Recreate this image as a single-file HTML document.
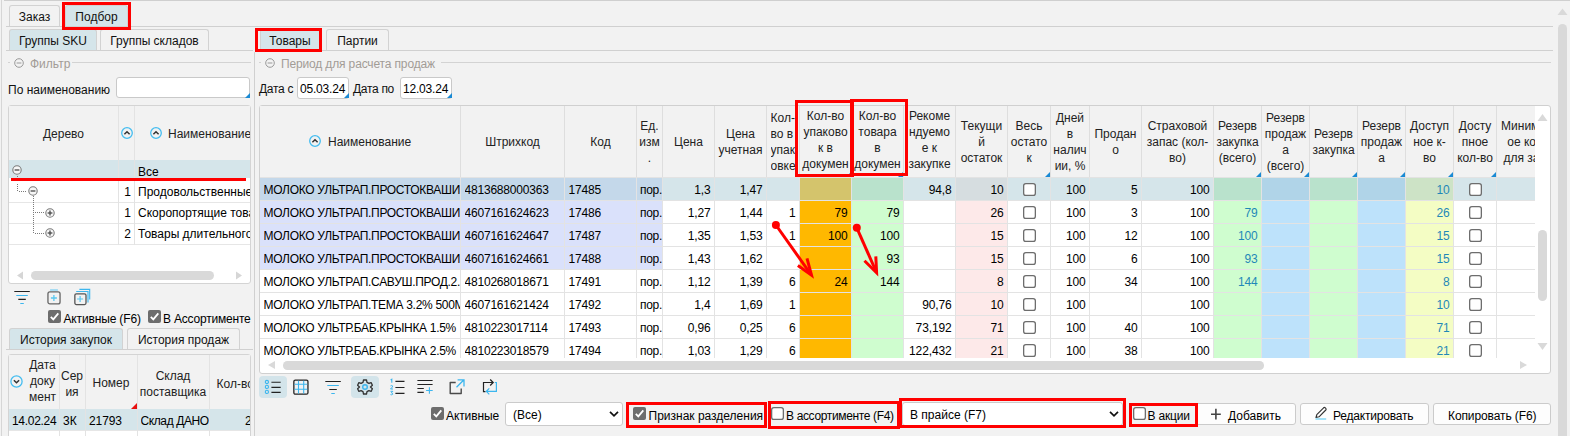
<!DOCTYPE html>
<html><head><meta charset="utf-8"><style>
html,body{margin:0;padding:0;}
body{width:1570px;height:436px;position:relative;overflow:hidden;background:#f2f2f2;font-family:"Liberation Sans", sans-serif;font-size:12px;color:#000;}
div{position:absolute;box-sizing:content-box;}
</style></head><body>
<div style="left:4px;top:0px;width:1566px;height:1px;background:#cfcfcf;"></div>
<div style="left:1px;top:0px;width:1px;height:436px;background:#d6d6d6;"></div>
<div style="left:9px;top:5px;width:49px;height:21px;border:1px solid #d2d2d2;border-bottom:none;border-radius:3px 3px 0 0;background:#f2f2f2"></div>
<div style="left:9px;top:8.5px;width:51px;text-align:center;height:16px;line-height:16px;font-size:12px;color:#111;white-space:nowrap;">Заказ</div>
<div style="left:65px;top:5px;width:61px;height:21px;border:1px solid #d2d2d2;border-bottom:none;border-radius:3px 3px 0 0;background:#d5e5ea"></div>
<div style="left:65px;top:8.5px;width:63px;text-align:center;height:16px;line-height:16px;font-size:12px;color:#111;white-space:nowrap;">Подбор</div>
<div style="left:6px;top:26px;width:1547px;height:1px;background:#d0d0d0;"></div>
<div style="left:62px;top:2px;width:63px;height:22px;border:3px solid #ff0000;z-index:50"></div>
<div style="left:9px;top:29px;width:86px;height:21px;border:1px solid #d2d2d2;border-bottom:none;border-radius:3px 3px 0 0;background:#d5e5ea"></div>
<div style="left:9px;top:32.5px;width:88px;text-align:center;height:16px;line-height:16px;font-size:12px;color:#111;white-space:nowrap;">Группы SKU</div>
<div style="left:100px;top:29px;width:107px;height:21px;border:1px solid #d2d2d2;border-bottom:none;border-radius:3px 3px 0 0;background:#f2f2f2"></div>
<div style="left:100px;top:32.5px;width:109px;text-align:center;height:16px;line-height:16px;font-size:12px;color:#111;white-space:nowrap;">Группы складов</div>
<div style="left:6px;top:50px;width:247px;height:1px;background:#d0d0d0;"></div>
<div style="left:8px;top:62px;width:243px;height:1px;background:#d3d3d3;"></div>
<div style="left:10px;top:55px;width:62px;height:14px;background:#f2f2f2;"></div>
<svg style="position:absolute;left:14px;top:58px;z-index:5" width="10" height="10" viewBox="0 0 10 10"><circle cx="5" cy="5" r="4.3" fill="none" stroke="#9a9a9a" stroke-width="1"/><path d="M2.6 5 H7.4" stroke="#9a9a9a" stroke-width="1"/></svg>
<div style="left:30px;top:56.0px;height:16px;line-height:16px;font-size:12px;color:#a29c96;white-space:nowrap;">Фильтр</div>
<div style="left:8px;top:81.5px;height:16px;line-height:16px;font-size:12px;color:#111;white-space:nowrap;">По наименованию</div>
<div style="left:116px;top:77px;width:132px;height:19px;border:1px solid #c9c9c9;border-radius:3px;background:#fff"></div>
<svg style="position:absolute;left:245px;top:93px;z-index:5" width="5" height="5" viewBox="0 0 5 5"><path d="M5 0 L5 5 L0 5 Z" fill="#1a8ad4"/></svg>
<div style="left:8px;top:105px;width:241px;height:177px;border:1px solid #d4d4d4;border-radius:3px;background:#fff"></div>
<div style="left:9px;top:106px;width:241px;height:176px;overflow:hidden;">
<div style="left:0px;top:0px;width:241px;height:54px;background:#f2f2f2;"></div>
<div style="left:0px;top:20.0px;width:109px;text-align:center;height:16px;line-height:16px;font-size:12px;color:#222;white-space:nowrap;">Дерево</div>
<svg style="position:absolute;left:110.5px;top:20.30000000000001px;z-index:5" width="14" height="14" viewBox="0 0 14 14"><circle cx="7" cy="7" r="5.3" fill="none" stroke="#45bdf0" stroke-width="1.3"/><path transform="translate(7 7)" d="M-2.6 1.3 L0 -1.3 L2.6 1.3" stroke="#333" stroke-width="1.5" fill="none"/></svg>
<svg style="position:absolute;left:139.5px;top:20.30000000000001px;z-index:5" width="14" height="14" viewBox="0 0 14 14"><circle cx="7" cy="7" r="5.3" fill="none" stroke="#45bdf0" stroke-width="1.3"/><path transform="translate(7 7)" d="M-2.6 1.3 L0 -1.3 L2.6 1.3" stroke="#333" stroke-width="1.5" fill="none"/></svg>
<div style="left:159px;top:20.0px;height:16px;line-height:16px;font-size:12px;color:#222;white-space:nowrap;">Наименование</div>
<div style="left:0px;top:54px;width:241px;height:18px;background:#d5e5ea;"></div>
<div style="left:129px;top:58.0px;height:16px;line-height:16px;font-size:12px;color:#000;white-space:nowrap;">Все</div>
<div style="left:0px;top:96px;width:241px;height:1px;background:#e6e6e6;"></div>
<div style="left:0px;top:117px;width:241px;height:1px;background:#e6e6e6;"></div>
<div style="left:0px;top:138px;width:241px;height:1px;background:#e6e6e6;"></div>
<div style="left:109px;top:0px;width:1px;height:139px;background:#e3e3e3;"></div>
<div style="left:125px;top:0px;width:1px;height:139px;background:#e3e3e3;"></div>
<div style="left:-78px;top:78.0px;width:200px;text-align:right;height:16px;line-height:16px;font-size:12px;color:#000;white-space:nowrap;">1</div>
<div style="left:129px;top:78.0px;height:16px;line-height:16px;font-size:12px;color:#000;white-space:nowrap;">Продовольственные товары</div>
<div style="left:-78px;top:99.0px;width:200px;text-align:right;height:16px;line-height:16px;font-size:12px;color:#000;white-space:nowrap;">1</div>
<div style="left:129px;top:99.0px;height:16px;line-height:16px;font-size:12px;color:#000;white-space:nowrap;">Скоропортящие товары</div>
<div style="left:-78px;top:120.0px;width:200px;text-align:right;height:16px;line-height:16px;font-size:12px;color:#000;white-space:nowrap;">2</div>
<div style="left:129px;top:120.0px;height:16px;line-height:16px;font-size:12px;color:#000;white-space:nowrap;">Товары длительного хранения</div>
<svg style="position:absolute;left:-9px;top:64px;z-index:5" width="60" height="70" viewBox="0 0 60 70"><rect x="17" y="6" width="1" height="1" fill="#7a7a7a"/><rect x="17" y="14" width="1" height="1" fill="#7a7a7a"/><rect x="17" y="16" width="1" height="1" fill="#7a7a7a"/><rect x="17" y="18" width="1" height="1" fill="#7a7a7a"/><rect x="17" y="20" width="1" height="1" fill="#7a7a7a"/><rect x="19" y="21" width="1" height="1" fill="#7a7a7a"/><rect x="21" y="21" width="1" height="1" fill="#7a7a7a"/><rect x="23" y="21" width="1" height="1" fill="#7a7a7a"/><rect x="25" y="21" width="1" height="1" fill="#7a7a7a"/><rect x="33" y="26" width="1" height="1" fill="#7a7a7a"/><rect x="33" y="28" width="1" height="1" fill="#7a7a7a"/><rect x="33" y="30" width="1" height="1" fill="#7a7a7a"/><rect x="33" y="32" width="1" height="1" fill="#7a7a7a"/><rect x="33" y="34" width="1" height="1" fill="#7a7a7a"/><rect x="33" y="36" width="1" height="1" fill="#7a7a7a"/><rect x="33" y="38" width="1" height="1" fill="#7a7a7a"/><rect x="33" y="40" width="1" height="1" fill="#7a7a7a"/><rect x="33" y="42" width="1" height="1" fill="#7a7a7a"/><rect x="33" y="44" width="1" height="1" fill="#7a7a7a"/><rect x="33" y="46" width="1" height="1" fill="#7a7a7a"/><rect x="33" y="48" width="1" height="1" fill="#7a7a7a"/><rect x="33" y="50" width="1" height="1" fill="#7a7a7a"/><rect x="33" y="52" width="1" height="1" fill="#7a7a7a"/><rect x="33" y="54" width="1" height="1" fill="#7a7a7a"/><rect x="33" y="56" width="1" height="1" fill="#7a7a7a"/><rect x="33" y="58" width="1" height="1" fill="#7a7a7a"/><rect x="33" y="60" width="1" height="1" fill="#7a7a7a"/><rect x="33" y="62" width="1" height="1" fill="#7a7a7a"/><rect x="35" y="42" width="1" height="1" fill="#7a7a7a"/><rect x="35" y="63" width="1" height="1" fill="#7a7a7a"/><rect x="37" y="42" width="1" height="1" fill="#7a7a7a"/><rect x="37" y="63" width="1" height="1" fill="#7a7a7a"/><rect x="39" y="42" width="1" height="1" fill="#7a7a7a"/><rect x="39" y="63" width="1" height="1" fill="#7a7a7a"/><rect x="41" y="42" width="1" height="1" fill="#7a7a7a"/><rect x="41" y="63" width="1" height="1" fill="#7a7a7a"/><rect x="43" y="42" width="1" height="1" fill="#7a7a7a"/><rect x="43" y="63" width="1" height="1" fill="#7a7a7a"/></svg>
<svg style="position:absolute;left:3.1999999999999993px;top:59px;z-index:5" width="10" height="10" viewBox="0 0 10 10"><circle cx="5" cy="5" r="4.2" fill="#f7f7f7" stroke="#7a7a7a" stroke-width="1.1"/><path d="M2.6 5 H7.4" stroke="#4a4a4a" stroke-width="1.3"/></svg>
<svg style="position:absolute;left:19.200000000000003px;top:79.80000000000001px;z-index:5" width="10" height="10" viewBox="0 0 10 10"><circle cx="5" cy="5" r="4.2" fill="#f7f7f7" stroke="#7a7a7a" stroke-width="1.1"/><path d="M2.6 5 H7.4" stroke="#4a4a4a" stroke-width="1.3"/></svg>
<svg style="position:absolute;left:35.5px;top:101.5px;z-index:5" width="10" height="10" viewBox="0 0 10 10"><circle cx="5" cy="5" r="4.2" fill="#f7f7f7" stroke="#7a7a7a" stroke-width="1.1"/><path d="M2.6 5 H7.4" stroke="#4a4a4a" stroke-width="1.3"/><path d="M5 2.6 V7.4" stroke="#4a4a4a" stroke-width="1.3"/></svg>
<svg style="position:absolute;left:35.5px;top:122px;z-index:5" width="10" height="10" viewBox="0 0 10 10"><circle cx="5" cy="5" r="4.2" fill="#f7f7f7" stroke="#7a7a7a" stroke-width="1.1"/><path d="M2.6 5 H7.4" stroke="#4a4a4a" stroke-width="1.3"/><path d="M5 2.6 V7.4" stroke="#4a4a4a" stroke-width="1.3"/></svg>
<svg style="position:absolute;left:7px;top:165px;z-index:5" width="8" height="9" viewBox="0 0 8 9"><path d="M7 0.5 L1 4.5 L7 8.5 Z" fill="#d6d6d6"/></svg>
<div style="left:22px;top:165px;width:183px;height:9px;border-radius:4.5px;background:#d9d9d9"></div>
<svg style="position:absolute;left:226px;top:165px;z-index:5" width="8" height="9" viewBox="0 0 8 9"><path d="M1 0.5 L7 4.5 L1 8.5 Z" fill="#d6d6d6"/></svg>
</div>
<div style="left:11px;top:178px;width:235px;height:3px;background:#ff0000;z-index:40"></div>
<svg style="position:absolute;left:14px;top:290px;z-index:5" width="16" height="15" viewBox="0 0 16 15"><path d="M0.3 1.5 H15.8 M4.3 9.4 H11.8" stroke="#222" stroke-width="1.15"/><path d="M2.3 5.5 H13.8 M6.3 13.5 H9.8" stroke="#3cb6ee" stroke-width="1.15"/></svg>
<svg style="position:absolute;left:46px;top:288px;z-index:5" width="16" height="17" viewBox="0 0 16 17"><path d="M4.1 2 H11.9" stroke="#7fd0f2" stroke-width="1.3"/><rect x="1.95" y="3.85" width="12.1" height="12.1" rx="2" fill="none" stroke="#666" stroke-width="1.3"/><path d="M7.9 7 V13 M4.9 10 H10.9" stroke="#5ac8f0" stroke-width="1.3"/></svg>
<svg style="position:absolute;left:73px;top:288px;z-index:5" width="18" height="18" viewBox="0 0 18 18"><path d="M6.4 1.4 H16.7 V11.5" stroke="#3cb6ee" stroke-width="1.1" fill="none"/><path d="M3.2 3.5 H15 V14.6" stroke="#3cb6ee" stroke-width="1.1" fill="none"/><rect x="1.85" y="5.85" width="11.15" height="10.75" rx="1.5" fill="#f2f2f2" stroke="#555" stroke-width="1.3"/><path d="M7.1 8 V14 M4.1 11 H10.1" stroke="#5ac8f0" stroke-width="1.2"/></svg>
<svg style="position:absolute;left:48px;top:310px;z-index:5" width="13" height="13" viewBox="0 0 13 13"><rect x="0" y="0" width="13" height="13" rx="2" fill="#6d6d6d"/><path d="M2.8 6.8 L5.3 9.3 L10.3 3.3" stroke="#fff" stroke-width="1.8" fill="none"/></svg>
<div style="left:63.5px;top:310.5px;height:16px;line-height:16px;font-size:12px;color:#000;white-space:nowrap;letter-spacing:-0.15px">Активные (F6)</div>
<svg style="position:absolute;left:148px;top:310px;z-index:5" width="13" height="13" viewBox="0 0 13 13"><rect x="0" y="0" width="13" height="13" rx="2" fill="#6d6d6d"/><path d="M2.8 6.8 L5.3 9.3 L10.3 3.3" stroke="#fff" stroke-width="1.8" fill="none"/></svg>
<div style="left:163px;top:310.5px;height:16px;line-height:16px;font-size:12px;color:#000;white-space:nowrap;letter-spacing:-0.2px">В Ассортименте</div>
<div style="left:9px;top:328px;width:112px;height:21px;border:1px solid #d2d2d2;border-bottom:none;border-radius:3px 3px 0 0;background:#d5e5ea"></div>
<div style="left:9px;top:331.5px;width:114px;text-align:center;height:16px;line-height:16px;font-size:12px;color:#111;white-space:nowrap;">История закупок</div>
<div style="left:127px;top:328px;width:111px;height:21px;border:1px solid #d2d2d2;border-bottom:none;border-radius:3px 3px 0 0;background:#f2f2f2"></div>
<div style="left:127px;top:331.5px;width:113px;text-align:center;height:16px;line-height:16px;font-size:12px;color:#111;white-space:nowrap;">История продаж</div>
<div style="left:6px;top:349px;width:247px;height:1px;background:#d0d0d0;"></div>
<div style="left:8px;top:354px;width:241px;height:100px;border:1px solid #d4d4d4;border-radius:3px;background:#fff"></div>
<div style="left:9px;top:355px;width:241px;height:81px;overflow:hidden;">
<div style="left:0px;top:0px;width:241px;height:54px;background:#f2f2f2;"></div>
<div style="left:0px;top:54px;width:241px;height:21px;background:#d5e5ea;"></div>
<div style="left:0px;top:75px;width:241px;height:1px;background:#e6e6e6;"></div>
<div style="left:50px;top:0px;width:1px;height:81px;background:#e3e3e3;"></div>
<div style="left:76px;top:0px;width:1px;height:81px;background:#e3e3e3;"></div>
<div style="left:128px;top:0px;width:1px;height:81px;background:#e3e3e3;"></div>
<div style="left:200px;top:0px;width:1px;height:81px;background:#e3e3e3;"></div>
<svg style="position:absolute;left:1px;top:20px;z-index:5" width="13" height="13" viewBox="0 0 13 13"><circle cx="6.5" cy="6.5" r="5.6" fill="none" stroke="#45bdf0" stroke-width="1.3"/><path d="M3.9 5.2 L6.5 7.8 L9.1 5.2" stroke="#333" stroke-width="1.5" fill="none"/></svg>
<div style="left:17px;top:1.5px;width:33px;text-align:center;height:16px;line-height:16px;font-size:12px;color:#222;white-space:nowrap;">Дата</div>
<div style="left:17px;top:17.5px;width:33px;text-align:center;height:16px;line-height:16px;font-size:12px;color:#222;white-space:nowrap;">доку</div>
<div style="left:17px;top:33.5px;width:33px;text-align:center;height:16px;line-height:16px;font-size:12px;color:#222;white-space:nowrap;">мент</div>
<div style="left:50px;top:12.5px;width:26px;text-align:center;height:16px;line-height:16px;font-size:12px;color:#222;white-space:nowrap;">Сер</div>
<div style="left:50px;top:28.5px;width:26px;text-align:center;height:16px;line-height:16px;font-size:12px;color:#222;white-space:nowrap;">ия</div>
<div style="left:76px;top:20.0px;width:52px;text-align:center;height:16px;line-height:16px;font-size:12px;color:#222;white-space:nowrap;">Номер</div>
<svg style="position:absolute;left:122px;top:48px;z-index:5" width="6" height="6" viewBox="0 0 6 6"><path d="M6 0 L6 6 L0 6 Z" fill="#e81010"/></svg>
<div style="left:128px;top:13.0px;width:72px;text-align:center;height:16px;line-height:16px;font-size:12px;color:#222;white-space:nowrap;">Склад</div>
<div style="left:128px;top:29.0px;width:72px;text-align:center;height:16px;line-height:16px;font-size:12px;color:#222;white-space:nowrap;">поставщика</div>
<div style="left:207.5px;top:21.0px;height:16px;line-height:16px;font-size:12px;color:#222;white-space:nowrap;">Кол-во</div>
<div style="left:3px;top:57.5px;height:16px;line-height:16px;font-size:12px;color:#000;white-space:nowrap;letter-spacing:-0.3px">14.02.24</div>
<div style="left:54px;top:57.5px;height:16px;line-height:16px;font-size:12px;color:#000;white-space:nowrap;">3К</div>
<div style="left:80px;top:57.5px;height:16px;line-height:16px;font-size:12px;color:#000;white-space:nowrap;letter-spacing:-0.1px">21793</div>
<div style="left:131.5px;top:57.5px;width:68px;overflow:hidden;height:16px;line-height:16px;font-size:12px;color:#000;white-space:nowrap;letter-spacing:-0.4px">Склад ДАНОН</div>
<div style="left:236px;top:57.5px;height:16px;line-height:16px;font-size:12px;color:#000;white-space:nowrap;">2</div>
</div>
<div style="left:254px;top:52px;width:1px;height:384px;background:#d0d0d0;"></div>
<div style="left:260px;top:29px;width:58px;height:21px;border:1px solid #d2d2d2;border-bottom:none;border-radius:3px 3px 0 0;background:#d5e5ea"></div>
<div style="left:260px;top:32.5px;width:60px;text-align:center;height:16px;line-height:16px;font-size:12px;color:#111;white-space:nowrap;">Товары</div>
<div style="left:326px;top:29px;width:61px;height:21px;border:1px solid #d2d2d2;border-bottom:none;border-radius:3px 3px 0 0;background:#f2f2f2"></div>
<div style="left:326px;top:32.5px;width:63px;text-align:center;height:16px;line-height:16px;font-size:12px;color:#111;white-space:nowrap;">Партии</div>
<div style="left:255px;top:50px;width:1298px;height:1px;background:#d0d0d0;"></div>
<div style="left:255px;top:28px;width:61px;height:18px;border:3px solid #ff0000;z-index:50"></div>
<div style="left:259px;top:62px;width:1292px;height:1px;background:#d3d3d3;"></div>
<div style="left:261px;top:55px;width:180px;height:14px;background:#f2f2f2;"></div>
<svg style="position:absolute;left:265px;top:58px;z-index:5" width="10" height="10" viewBox="0 0 10 10"><circle cx="5" cy="5" r="4.3" fill="none" stroke="#9a9a9a" stroke-width="1"/><path d="M2.6 5 H7.4" stroke="#9a9a9a" stroke-width="1"/></svg>
<div style="left:281px;top:56.0px;height:16px;line-height:16px;font-size:12px;color:#a29c96;white-space:nowrap;letter-spacing:-0.15px">Период для расчета продаж</div>
<div style="left:259px;top:81.0px;height:16px;line-height:16px;font-size:12px;color:#111;white-space:nowrap;letter-spacing:-0.3px">Дата с</div>
<div style="left:297px;top:77px;width:50px;height:20px;border:1px solid #c9c9c9;border-radius:3px;background:#fff"></div>
<div style="left:300px;top:81.0px;height:16px;line-height:16px;font-size:12px;color:#000;white-space:nowrap;letter-spacing:-0.2px">05.03.24</div>
<svg style="position:absolute;left:344px;top:93px;z-index:5" width="5" height="5" viewBox="0 0 5 5"><path d="M5 0 L5 5 L0 5 Z" fill="#1a8ad4"/></svg>
<div style="left:353px;top:81.0px;height:16px;line-height:16px;font-size:12px;color:#111;white-space:nowrap;letter-spacing:-0.3px">Дата по</div>
<div style="left:400px;top:77px;width:50px;height:20px;border:1px solid #c9c9c9;border-radius:3px;background:#fff"></div>
<div style="left:403px;top:81.0px;height:16px;line-height:16px;font-size:12px;color:#000;white-space:nowrap;letter-spacing:-0.2px">12.03.24</div>
<svg style="position:absolute;left:447px;top:93px;z-index:5" width="5" height="5" viewBox="0 0 5 5"><path d="M5 0 L5 5 L0 5 Z" fill="#1a8ad4"/></svg>
<div style="left:259px;top:105px;width:1292px;height:269px;border:1px solid #d0d0d0;border-radius:3px;background:#fff;box-sizing:border-box"></div>
<div style="left:260px;top:106px;width:1275px;height:252px;overflow:hidden;z-index:2">
<div style="left:0px;top:0px;width:1400px;height:71px;background:#f2f2f2;"></div>
<div style="left:201px;top:28.400000000000006px;width:103px;text-align:center;height:16px;line-height:16px;color:#222;white-space:nowrap;">Штрихкод</div>
<div style="left:305px;top:28.400000000000006px;width:71px;text-align:center;height:16px;line-height:16px;color:#222;white-space:nowrap;">Код</div>
<div style="left:377px;top:12.400000000000006px;width:25px;text-align:center;height:16px;line-height:16px;color:#222;white-space:nowrap;">Ед.</div>
<div style="left:377px;top:28.400000000000006px;width:25px;text-align:center;height:16px;line-height:16px;color:#222;white-space:nowrap;">изм</div>
<div style="left:377px;top:44.400000000000006px;width:25px;text-align:center;height:16px;line-height:16px;color:#222;white-space:nowrap;">.</div>
<div style="left:403px;top:28.400000000000006px;width:51px;text-align:center;height:16px;line-height:16px;color:#222;white-space:nowrap;">Цена</div>
<div style="left:455px;top:20.400000000000006px;width:51px;text-align:center;height:16px;line-height:16px;color:#222;white-space:nowrap;">Цена</div>
<div style="left:455px;top:36.400000000000006px;width:51px;text-align:center;height:16px;line-height:16px;color:#222;white-space:nowrap;">учетная</div>
<div style="left:510.5px;top:4.400000000000006px;width:28.5px;overflow:hidden;height:16px;line-height:16px;color:#222;white-space:nowrap;">Кол-</div>
<div style="left:510.5px;top:20.400000000000006px;width:28.5px;overflow:hidden;height:16px;line-height:16px;color:#222;white-space:nowrap;">во в</div>
<div style="left:510.5px;top:36.400000000000006px;width:28.5px;overflow:hidden;height:16px;line-height:16px;color:#222;white-space:nowrap;">упак</div>
<div style="left:510.5px;top:52.400000000000006px;width:28.5px;overflow:hidden;height:16px;line-height:16px;color:#222;white-space:nowrap;">овке</div>
<div style="left:540px;top:2.3000000000000114px;width:51px;text-align:center;height:16px;line-height:16px;color:#222;white-space:nowrap;">Кол-во</div>
<div style="left:540px;top:18.30000000000001px;width:51px;text-align:center;height:16px;line-height:16px;color:#222;white-space:nowrap;">упаково</div>
<div style="left:540px;top:34.30000000000001px;width:51px;text-align:center;height:16px;line-height:16px;color:#222;white-space:nowrap;">к в</div>
<div style="left:540px;top:50.30000000000001px;width:51px;text-align:center;height:16px;line-height:16px;color:#222;white-space:nowrap;">докумен</div>
<div style="left:592px;top:2.3000000000000114px;width:51px;text-align:center;height:16px;line-height:16px;color:#222;white-space:nowrap;">Кол-во</div>
<div style="left:592px;top:18.30000000000001px;width:51px;text-align:center;height:16px;line-height:16px;color:#222;white-space:nowrap;">товара</div>
<div style="left:592px;top:34.30000000000001px;width:51px;text-align:center;height:16px;line-height:16px;color:#222;white-space:nowrap;">в</div>
<div style="left:592px;top:50.30000000000001px;width:51px;text-align:center;height:16px;line-height:16px;color:#222;white-space:nowrap;">докумен</div>
<div style="left:644px;top:2.3000000000000114px;width:51px;text-align:center;height:16px;line-height:16px;color:#222;white-space:nowrap;">Рекоме</div>
<div style="left:644px;top:18.30000000000001px;width:51px;text-align:center;height:16px;line-height:16px;color:#222;white-space:nowrap;">ндуемо</div>
<div style="left:644px;top:34.30000000000001px;width:51px;text-align:center;height:16px;line-height:16px;color:#222;white-space:nowrap;">е к</div>
<div style="left:644px;top:50.30000000000001px;width:51px;text-align:center;height:16px;line-height:16px;color:#222;white-space:nowrap;">закупке</div>
<div style="left:696px;top:12.400000000000006px;width:51px;text-align:center;height:16px;line-height:16px;color:#222;white-space:nowrap;">Текущи</div>
<div style="left:696px;top:28.400000000000006px;width:51px;text-align:center;height:16px;line-height:16px;color:#222;white-space:nowrap;">й</div>
<div style="left:696px;top:44.400000000000006px;width:51px;text-align:center;height:16px;line-height:16px;color:#222;white-space:nowrap;">остаток</div>
<div style="left:748px;top:12.400000000000006px;width:42px;text-align:center;height:16px;line-height:16px;color:#222;white-space:nowrap;">Весь</div>
<div style="left:748px;top:28.400000000000006px;width:42px;text-align:center;height:16px;line-height:16px;color:#222;white-space:nowrap;">остато</div>
<div style="left:748px;top:44.400000000000006px;width:42px;text-align:center;height:16px;line-height:16px;color:#222;white-space:nowrap;">к</div>
<div style="left:791px;top:4.400000000000006px;width:38px;text-align:center;height:16px;line-height:16px;color:#222;white-space:nowrap;">Дней</div>
<div style="left:791px;top:20.400000000000006px;width:38px;text-align:center;height:16px;line-height:16px;color:#222;white-space:nowrap;">в</div>
<div style="left:791px;top:36.400000000000006px;width:38px;text-align:center;height:16px;line-height:16px;color:#222;white-space:nowrap;">налич</div>
<div style="left:791px;top:52.400000000000006px;width:38px;text-align:center;height:16px;line-height:16px;color:#222;white-space:nowrap;">ии, %</div>
<div style="left:830px;top:20.400000000000006px;width:51px;text-align:center;height:16px;line-height:16px;color:#222;white-space:nowrap;">Продан</div>
<div style="left:830px;top:36.400000000000006px;width:51px;text-align:center;height:16px;line-height:16px;color:#222;white-space:nowrap;">о</div>
<div style="left:882px;top:12.400000000000006px;width:71px;text-align:center;height:16px;line-height:16px;color:#222;white-space:nowrap;">Страховой</div>
<div style="left:882px;top:28.400000000000006px;width:71px;text-align:center;height:16px;line-height:16px;color:#222;white-space:nowrap;">запас (кол-</div>
<div style="left:882px;top:44.400000000000006px;width:71px;text-align:center;height:16px;line-height:16px;color:#222;white-space:nowrap;">во)</div>
<div style="left:954px;top:12.400000000000006px;width:47px;text-align:center;height:16px;line-height:16px;color:#222;white-space:nowrap;">Резерв</div>
<div style="left:954px;top:28.400000000000006px;width:47px;text-align:center;height:16px;line-height:16px;color:#222;white-space:nowrap;">закупка</div>
<div style="left:954px;top:44.400000000000006px;width:47px;text-align:center;height:16px;line-height:16px;color:#222;white-space:nowrap;">(всего)</div>
<div style="left:1002px;top:4.400000000000006px;width:47px;text-align:center;height:16px;line-height:16px;color:#222;white-space:nowrap;">Резерв</div>
<div style="left:1002px;top:20.400000000000006px;width:47px;text-align:center;height:16px;line-height:16px;color:#222;white-space:nowrap;">продаж</div>
<div style="left:1002px;top:36.400000000000006px;width:47px;text-align:center;height:16px;line-height:16px;color:#222;white-space:nowrap;">а</div>
<div style="left:1002px;top:52.400000000000006px;width:47px;text-align:center;height:16px;line-height:16px;color:#222;white-space:nowrap;">(всего)</div>
<div style="left:1050px;top:20.400000000000006px;width:47px;text-align:center;height:16px;line-height:16px;color:#222;white-space:nowrap;">Резерв</div>
<div style="left:1050px;top:36.400000000000006px;width:47px;text-align:center;height:16px;line-height:16px;color:#222;white-space:nowrap;">закупка</div>
<div style="left:1098px;top:12.400000000000006px;width:47px;text-align:center;height:16px;line-height:16px;color:#222;white-space:nowrap;">Резерв</div>
<div style="left:1098px;top:28.400000000000006px;width:47px;text-align:center;height:16px;line-height:16px;color:#222;white-space:nowrap;">продаж</div>
<div style="left:1098px;top:44.400000000000006px;width:47px;text-align:center;height:16px;line-height:16px;color:#222;white-space:nowrap;">а</div>
<div style="left:1146px;top:12.400000000000006px;width:47px;text-align:center;height:16px;line-height:16px;color:#222;white-space:nowrap;">Доступ</div>
<div style="left:1146px;top:28.400000000000006px;width:47px;text-align:center;height:16px;line-height:16px;color:#222;white-space:nowrap;">ное к-</div>
<div style="left:1146px;top:44.400000000000006px;width:47px;text-align:center;height:16px;line-height:16px;color:#222;white-space:nowrap;">во</div>
<div style="left:1194px;top:12.400000000000006px;width:42px;text-align:center;height:16px;line-height:16px;color:#222;white-space:nowrap;">Досту</div>
<div style="left:1194px;top:28.400000000000006px;width:42px;text-align:center;height:16px;line-height:16px;color:#222;white-space:nowrap;">пное</div>
<div style="left:1194px;top:44.400000000000006px;width:42px;text-align:center;height:16px;line-height:16px;color:#222;white-space:nowrap;">кол-во</div>
<div style="left:1237px;top:12.400000000000006px;width:73px;text-align:center;height:16px;line-height:16px;color:#222;white-space:nowrap;">Минимальн</div>
<div style="left:1237px;top:28.400000000000006px;width:73px;text-align:center;height:16px;line-height:16px;color:#222;white-space:nowrap;">ое кол-во</div>
<div style="left:1237px;top:44.400000000000006px;width:73px;text-align:center;height:16px;line-height:16px;color:#222;white-space:nowrap;">для заказа</div>
<svg style="position:absolute;left:48px;top:28px;z-index:5" width="14" height="14" viewBox="0 0 14 14"><circle cx="7" cy="7" r="5.3" fill="none" stroke="#45bdf0" stroke-width="1.3"/><path transform="translate(7 7)" d="M-2.6 1.3 L0 -1.3 L2.6 1.3" stroke="#333" stroke-width="1.5" fill="none"/></svg>
<div style="left:68px;top:27.5px;width:132px;overflow:hidden;height:16px;line-height:16px;color:#222;white-space:nowrap;">Наименование</div>
<div style="left:200px;top:0px;width:1px;height:71px;background:#dedede;"></div>
<div style="left:304px;top:0px;width:1px;height:71px;background:#dedede;"></div>
<div style="left:376px;top:0px;width:1px;height:71px;background:#dedede;"></div>
<div style="left:402px;top:0px;width:1px;height:71px;background:#dedede;"></div>
<div style="left:454px;top:0px;width:1px;height:71px;background:#dedede;"></div>
<div style="left:506px;top:0px;width:1px;height:71px;background:#dedede;"></div>
<div style="left:539px;top:0px;width:1px;height:71px;background:#dedede;"></div>
<div style="left:591px;top:0px;width:1px;height:71px;background:#dedede;"></div>
<div style="left:643px;top:0px;width:1px;height:71px;background:#dedede;"></div>
<div style="left:695px;top:0px;width:1px;height:71px;background:#dedede;"></div>
<div style="left:747px;top:0px;width:1px;height:71px;background:#dedede;"></div>
<div style="left:790px;top:0px;width:1px;height:71px;background:#dedede;"></div>
<div style="left:829px;top:0px;width:1px;height:71px;background:#dedede;"></div>
<div style="left:881px;top:0px;width:1px;height:71px;background:#dedede;"></div>
<div style="left:953px;top:0px;width:1px;height:71px;background:#dedede;"></div>
<div style="left:1001px;top:0px;width:1px;height:71px;background:#dedede;"></div>
<div style="left:1049px;top:0px;width:1px;height:71px;background:#dedede;"></div>
<div style="left:1097px;top:0px;width:1px;height:71px;background:#dedede;"></div>
<div style="left:1145px;top:0px;width:1px;height:71px;background:#dedede;"></div>
<div style="left:1193px;top:0px;width:1px;height:71px;background:#dedede;"></div>
<div style="left:1236px;top:0px;width:1px;height:71px;background:#dedede;"></div>
<svg style="position:absolute;left:586px;top:66px;z-index:5" width="5" height="5" viewBox="0 0 5 5"><path d="M5 0 L5 5 L0 5 Z" fill="#1a8ad4"/></svg>
<svg style="position:absolute;left:638px;top:66px;z-index:5" width="5" height="5" viewBox="0 0 5 5"><path d="M5 0 L5 5 L0 5 Z" fill="#1a8ad4"/></svg>
<svg style="position:absolute;left:785px;top:66px;z-index:5" width="5" height="5" viewBox="0 0 5 5"><path d="M5 0 L5 5 L0 5 Z" fill="#1a8ad4"/></svg>
<svg style="position:absolute;left:996px;top:66px;z-index:5" width="5" height="5" viewBox="0 0 5 5"><path d="M5 0 L5 5 L0 5 Z" fill="#1a8ad4"/></svg>
<svg style="position:absolute;left:1044px;top:66px;z-index:5" width="5" height="5" viewBox="0 0 5 5"><path d="M5 0 L5 5 L0 5 Z" fill="#1a8ad4"/></svg>
<svg style="position:absolute;left:1092px;top:66px;z-index:5" width="5" height="5" viewBox="0 0 5 5"><path d="M5 0 L5 5 L0 5 Z" fill="#1a8ad4"/></svg>
<svg style="position:absolute;left:1140px;top:66px;z-index:5" width="5" height="5" viewBox="0 0 5 5"><path d="M5 0 L5 5 L0 5 Z" fill="#1a8ad4"/></svg>
<svg style="position:absolute;left:1188px;top:66px;z-index:5" width="5" height="5" viewBox="0 0 5 5"><path d="M5 0 L5 5 L0 5 Z" fill="#1a8ad4"/></svg>
<svg style="position:absolute;left:1231px;top:66px;z-index:5" width="5" height="5" viewBox="0 0 5 5"><path d="M5 0 L5 5 L0 5 Z" fill="#1a8ad4"/></svg>
<div style="left:0px;top:72px;width:200px;height:22px;background:#c4d8ea;"></div>
<div style="left:3.5px;top:75.5px;width:196.5px;overflow:hidden;height:16px;line-height:16px;color:#000;white-space:nowrap;letter-spacing:-0.3px">МОЛОКО УЛЬТРАП.ПРОСТОКВАШИНО 2.5%</div>
<div style="left:201px;top:72px;width:103px;height:22px;background:#c4d8ea;"></div>
<div style="left:204.5px;top:75.5px;width:99.5px;overflow:hidden;height:16px;line-height:16px;color:#000;white-space:nowrap;letter-spacing:-0.2px">4813688000363</div>
<div style="left:305px;top:72px;width:71px;height:22px;background:#c4d8ea;"></div>
<div style="left:308.5px;top:75.5px;width:67.5px;overflow:hidden;height:16px;line-height:16px;color:#000;white-space:nowrap;letter-spacing:-0.2px">17485</div>
<div style="left:377px;top:72px;width:25px;height:22px;background:#c4d8ea;"></div>
<div style="left:380px;top:75.5px;width:22px;overflow:hidden;height:16px;line-height:16px;color:#000;white-space:nowrap;letter-spacing:-0.3px">пор.</div>
<div style="left:403px;top:72px;width:51px;height:22px;background:#d5e5ea;"></div>
<div style="left:403px;top:75.5px;width:47.7px;text-align:right;overflow:hidden;height:16px;line-height:16px;color:#000;white-space:nowrap;letter-spacing:-0.1px">1,3</div>
<div style="left:455px;top:72px;width:51px;height:22px;background:#d5e5ea;"></div>
<div style="left:455px;top:75.5px;width:47.7px;text-align:right;overflow:hidden;height:16px;line-height:16px;color:#000;white-space:nowrap;letter-spacing:-0.1px">1,47</div>
<div style="left:507px;top:72px;width:32px;height:22px;background:#d5e5ea;"></div>
<div style="left:540px;top:72px;width:51px;height:22px;background:#d4c46c;"></div>
<div style="left:592px;top:72px;width:51px;height:22px;background:#b9e2cc;"></div>
<div style="left:644px;top:72px;width:51px;height:22px;background:#d5e5ea;"></div>
<div style="left:644px;top:75.5px;width:47.7px;text-align:right;overflow:hidden;height:16px;line-height:16px;color:#000;white-space:nowrap;letter-spacing:-0.1px">94,8</div>
<div style="left:696px;top:72px;width:51px;height:22px;background:#d6dde0;"></div>
<div style="left:696px;top:75.5px;width:47.7px;text-align:right;overflow:hidden;height:16px;line-height:16px;color:#000;white-space:nowrap;letter-spacing:-0.1px">10</div>
<div style="left:748px;top:72px;width:42px;height:22px;background:#d5e5ea;"></div>
<svg style="position:absolute;left:762.5px;top:77px;z-index:5" width="13" height="13" viewBox="0 0 13 13"><rect x="0.65" y="0.65" width="11.7" height="11.7" rx="2.2" fill="#fff" stroke="#6d6d6d" stroke-width="1.3"/></svg>
<div style="left:791px;top:72px;width:38px;height:22px;background:#d5e5ea;"></div>
<div style="left:791px;top:75.5px;width:34.7px;text-align:right;overflow:hidden;height:16px;line-height:16px;color:#000;white-space:nowrap;letter-spacing:-0.1px">100</div>
<div style="left:830px;top:72px;width:51px;height:22px;background:#d5e5ea;"></div>
<div style="left:830px;top:75.5px;width:47.7px;text-align:right;overflow:hidden;height:16px;line-height:16px;color:#000;white-space:nowrap;letter-spacing:-0.1px">5</div>
<div style="left:882px;top:72px;width:71px;height:22px;background:#d5e5ea;"></div>
<div style="left:882px;top:75.5px;width:67.7px;text-align:right;overflow:hidden;height:16px;line-height:16px;color:#000;white-space:nowrap;letter-spacing:-0.1px">100</div>
<div style="left:954px;top:72px;width:47px;height:22px;background:#b9e2cc;"></div>
<div style="left:1002px;top:72px;width:47px;height:22px;background:#b0d4e8;"></div>
<div style="left:1050px;top:72px;width:47px;height:22px;background:#b9e2cc;"></div>
<div style="left:1098px;top:72px;width:47px;height:22px;background:#b0d4e8;"></div>
<div style="left:1146px;top:72px;width:47px;height:22px;background:#cde3c6;"></div>
<div style="left:1146px;top:75.5px;width:43.7px;text-align:right;overflow:hidden;height:16px;line-height:16px;color:#1f88b8;white-space:nowrap;letter-spacing:-0.1px">10</div>
<div style="left:1194px;top:72px;width:42px;height:22px;background:#d5e5ea;"></div>
<svg style="position:absolute;left:1208.5px;top:77px;z-index:5" width="13" height="13" viewBox="0 0 13 13"><rect x="0.65" y="0.65" width="11.7" height="11.7" rx="2.2" fill="#fff" stroke="#6d6d6d" stroke-width="1.3"/></svg>
<div style="left:1237px;top:72px;width:73px;height:22px;background:#d5e5ea;"></div>
<div style="left:0px;top:94px;width:1400px;height:1px;background:#e3e3e3;"></div>
<div style="left:0px;top:95px;width:200px;height:22px;background:#dae1fb;"></div>
<div style="left:3.5px;top:98.5px;width:196.5px;overflow:hidden;height:16px;line-height:16px;color:#000;white-space:nowrap;letter-spacing:-0.3px">МОЛОКО УЛЬТРАП.ПРОСТОКВАШИНО 2.5%</div>
<div style="left:201px;top:95px;width:103px;height:22px;background:#dae1fb;"></div>
<div style="left:204.5px;top:98.5px;width:99.5px;overflow:hidden;height:16px;line-height:16px;color:#000;white-space:nowrap;letter-spacing:-0.2px">4607161624623</div>
<div style="left:305px;top:95px;width:71px;height:22px;background:#dae1fb;"></div>
<div style="left:308.5px;top:98.5px;width:67.5px;overflow:hidden;height:16px;line-height:16px;color:#000;white-space:nowrap;letter-spacing:-0.2px">17486</div>
<div style="left:377px;top:95px;width:25px;height:22px;background:#dae1fb;"></div>
<div style="left:380px;top:98.5px;width:22px;overflow:hidden;height:16px;line-height:16px;color:#000;white-space:nowrap;letter-spacing:-0.3px">пор.</div>
<div style="left:403px;top:95px;width:51px;height:22px;background:#ffffff;"></div>
<div style="left:403px;top:98.5px;width:47.7px;text-align:right;overflow:hidden;height:16px;line-height:16px;color:#000;white-space:nowrap;letter-spacing:-0.1px">1,27</div>
<div style="left:455px;top:95px;width:51px;height:22px;background:#ffffff;"></div>
<div style="left:455px;top:98.5px;width:47.7px;text-align:right;overflow:hidden;height:16px;line-height:16px;color:#000;white-space:nowrap;letter-spacing:-0.1px">1,44</div>
<div style="left:507px;top:95px;width:32px;height:22px;background:#ffffff;"></div>
<div style="left:507px;top:98.5px;width:28.7px;text-align:right;overflow:hidden;height:16px;line-height:16px;color:#000;white-space:nowrap;letter-spacing:-0.1px">1</div>
<div style="left:540px;top:95px;width:51px;height:22px;background:#ffb800;"></div>
<div style="left:540px;top:98.5px;width:47.7px;text-align:right;overflow:hidden;height:16px;line-height:16px;color:#000;white-space:nowrap;letter-spacing:-0.1px">79</div>
<div style="left:592px;top:95px;width:51px;height:22px;background:#cffdcf;"></div>
<div style="left:592px;top:98.5px;width:47.7px;text-align:right;overflow:hidden;height:16px;line-height:16px;color:#000;white-space:nowrap;letter-spacing:-0.1px">79</div>
<div style="left:644px;top:95px;width:51px;height:22px;background:#ffffff;"></div>
<div style="left:696px;top:95px;width:51px;height:22px;background:#fde9e9;"></div>
<div style="left:696px;top:98.5px;width:47.7px;text-align:right;overflow:hidden;height:16px;line-height:16px;color:#000;white-space:nowrap;letter-spacing:-0.1px">26</div>
<div style="left:748px;top:95px;width:42px;height:22px;background:#ffffff;"></div>
<svg style="position:absolute;left:762.5px;top:100px;z-index:5" width="13" height="13" viewBox="0 0 13 13"><rect x="0.65" y="0.65" width="11.7" height="11.7" rx="2.2" fill="#fff" stroke="#6d6d6d" stroke-width="1.3"/></svg>
<div style="left:791px;top:95px;width:38px;height:22px;background:#ffffff;"></div>
<div style="left:791px;top:98.5px;width:34.7px;text-align:right;overflow:hidden;height:16px;line-height:16px;color:#000;white-space:nowrap;letter-spacing:-0.1px">100</div>
<div style="left:830px;top:95px;width:51px;height:22px;background:#ffffff;"></div>
<div style="left:830px;top:98.5px;width:47.7px;text-align:right;overflow:hidden;height:16px;line-height:16px;color:#000;white-space:nowrap;letter-spacing:-0.1px">3</div>
<div style="left:882px;top:95px;width:71px;height:22px;background:#ffffff;"></div>
<div style="left:882px;top:98.5px;width:67.7px;text-align:right;overflow:hidden;height:16px;line-height:16px;color:#000;white-space:nowrap;letter-spacing:-0.1px">100</div>
<div style="left:954px;top:95px;width:47px;height:22px;background:#cffdcf;"></div>
<div style="left:954px;top:98.5px;width:43.7px;text-align:right;overflow:hidden;height:16px;line-height:16px;color:#1f88b8;white-space:nowrap;letter-spacing:-0.1px">79</div>
<div style="left:1002px;top:95px;width:47px;height:22px;background:#bde2fb;"></div>
<div style="left:1050px;top:95px;width:47px;height:22px;background:#cffdcf;"></div>
<div style="left:1098px;top:95px;width:47px;height:22px;background:#bde2fb;"></div>
<div style="left:1146px;top:95px;width:47px;height:22px;background:#f4fdc4;"></div>
<div style="left:1146px;top:98.5px;width:43.7px;text-align:right;overflow:hidden;height:16px;line-height:16px;color:#1f88b8;white-space:nowrap;letter-spacing:-0.1px">26</div>
<div style="left:1194px;top:95px;width:42px;height:22px;background:#ffffff;"></div>
<svg style="position:absolute;left:1208.5px;top:100px;z-index:5" width="13" height="13" viewBox="0 0 13 13"><rect x="0.65" y="0.65" width="11.7" height="11.7" rx="2.2" fill="#fff" stroke="#6d6d6d" stroke-width="1.3"/></svg>
<div style="left:1237px;top:95px;width:73px;height:22px;background:#ffffff;"></div>
<div style="left:0px;top:117px;width:1400px;height:1px;background:#e3e3e3;"></div>
<div style="left:0px;top:118px;width:200px;height:22px;background:#dae1fb;"></div>
<div style="left:3.5px;top:121.5px;width:196.5px;overflow:hidden;height:16px;line-height:16px;color:#000;white-space:nowrap;letter-spacing:-0.3px">МОЛОКО УЛЬТРАП.ПРОСТОКВАШИНО 2.5%</div>
<div style="left:201px;top:118px;width:103px;height:22px;background:#dae1fb;"></div>
<div style="left:204.5px;top:121.5px;width:99.5px;overflow:hidden;height:16px;line-height:16px;color:#000;white-space:nowrap;letter-spacing:-0.2px">4607161624647</div>
<div style="left:305px;top:118px;width:71px;height:22px;background:#dae1fb;"></div>
<div style="left:308.5px;top:121.5px;width:67.5px;overflow:hidden;height:16px;line-height:16px;color:#000;white-space:nowrap;letter-spacing:-0.2px">17487</div>
<div style="left:377px;top:118px;width:25px;height:22px;background:#dae1fb;"></div>
<div style="left:380px;top:121.5px;width:22px;overflow:hidden;height:16px;line-height:16px;color:#000;white-space:nowrap;letter-spacing:-0.3px">пор.</div>
<div style="left:403px;top:118px;width:51px;height:22px;background:#ffffff;"></div>
<div style="left:403px;top:121.5px;width:47.7px;text-align:right;overflow:hidden;height:16px;line-height:16px;color:#000;white-space:nowrap;letter-spacing:-0.1px">1,35</div>
<div style="left:455px;top:118px;width:51px;height:22px;background:#ffffff;"></div>
<div style="left:455px;top:121.5px;width:47.7px;text-align:right;overflow:hidden;height:16px;line-height:16px;color:#000;white-space:nowrap;letter-spacing:-0.1px">1,53</div>
<div style="left:507px;top:118px;width:32px;height:22px;background:#ffffff;"></div>
<div style="left:507px;top:121.5px;width:28.7px;text-align:right;overflow:hidden;height:16px;line-height:16px;color:#000;white-space:nowrap;letter-spacing:-0.1px">1</div>
<div style="left:540px;top:118px;width:51px;height:22px;background:#ffb800;"></div>
<div style="left:540px;top:121.5px;width:47.7px;text-align:right;overflow:hidden;height:16px;line-height:16px;color:#000;white-space:nowrap;letter-spacing:-0.1px">100</div>
<div style="left:592px;top:118px;width:51px;height:22px;background:#cffdcf;"></div>
<div style="left:592px;top:121.5px;width:47.7px;text-align:right;overflow:hidden;height:16px;line-height:16px;color:#000;white-space:nowrap;letter-spacing:-0.1px">100</div>
<div style="left:644px;top:118px;width:51px;height:22px;background:#ffffff;"></div>
<div style="left:696px;top:118px;width:51px;height:22px;background:#fde9e9;"></div>
<div style="left:696px;top:121.5px;width:47.7px;text-align:right;overflow:hidden;height:16px;line-height:16px;color:#000;white-space:nowrap;letter-spacing:-0.1px">15</div>
<div style="left:748px;top:118px;width:42px;height:22px;background:#ffffff;"></div>
<svg style="position:absolute;left:762.5px;top:123px;z-index:5" width="13" height="13" viewBox="0 0 13 13"><rect x="0.65" y="0.65" width="11.7" height="11.7" rx="2.2" fill="#fff" stroke="#6d6d6d" stroke-width="1.3"/></svg>
<div style="left:791px;top:118px;width:38px;height:22px;background:#ffffff;"></div>
<div style="left:791px;top:121.5px;width:34.7px;text-align:right;overflow:hidden;height:16px;line-height:16px;color:#000;white-space:nowrap;letter-spacing:-0.1px">100</div>
<div style="left:830px;top:118px;width:51px;height:22px;background:#ffffff;"></div>
<div style="left:830px;top:121.5px;width:47.7px;text-align:right;overflow:hidden;height:16px;line-height:16px;color:#000;white-space:nowrap;letter-spacing:-0.1px">12</div>
<div style="left:882px;top:118px;width:71px;height:22px;background:#ffffff;"></div>
<div style="left:882px;top:121.5px;width:67.7px;text-align:right;overflow:hidden;height:16px;line-height:16px;color:#000;white-space:nowrap;letter-spacing:-0.1px">100</div>
<div style="left:954px;top:118px;width:47px;height:22px;background:#cffdcf;"></div>
<div style="left:954px;top:121.5px;width:43.7px;text-align:right;overflow:hidden;height:16px;line-height:16px;color:#1f88b8;white-space:nowrap;letter-spacing:-0.1px">100</div>
<div style="left:1002px;top:118px;width:47px;height:22px;background:#bde2fb;"></div>
<div style="left:1050px;top:118px;width:47px;height:22px;background:#cffdcf;"></div>
<div style="left:1098px;top:118px;width:47px;height:22px;background:#bde2fb;"></div>
<div style="left:1146px;top:118px;width:47px;height:22px;background:#f4fdc4;"></div>
<div style="left:1146px;top:121.5px;width:43.7px;text-align:right;overflow:hidden;height:16px;line-height:16px;color:#1f88b8;white-space:nowrap;letter-spacing:-0.1px">15</div>
<div style="left:1194px;top:118px;width:42px;height:22px;background:#ffffff;"></div>
<svg style="position:absolute;left:1208.5px;top:123px;z-index:5" width="13" height="13" viewBox="0 0 13 13"><rect x="0.65" y="0.65" width="11.7" height="11.7" rx="2.2" fill="#fff" stroke="#6d6d6d" stroke-width="1.3"/></svg>
<div style="left:1237px;top:118px;width:73px;height:22px;background:#ffffff;"></div>
<div style="left:0px;top:140px;width:1400px;height:1px;background:#e3e3e3;"></div>
<div style="left:0px;top:141px;width:200px;height:22px;background:#dae1fb;"></div>
<div style="left:3.5px;top:144.5px;width:196.5px;overflow:hidden;height:16px;line-height:16px;color:#000;white-space:nowrap;letter-spacing:-0.3px">МОЛОКО УЛЬТРАП.ПРОСТОКВАШИНО 2.5%</div>
<div style="left:201px;top:141px;width:103px;height:22px;background:#dae1fb;"></div>
<div style="left:204.5px;top:144.5px;width:99.5px;overflow:hidden;height:16px;line-height:16px;color:#000;white-space:nowrap;letter-spacing:-0.2px">4607161624661</div>
<div style="left:305px;top:141px;width:71px;height:22px;background:#dae1fb;"></div>
<div style="left:308.5px;top:144.5px;width:67.5px;overflow:hidden;height:16px;line-height:16px;color:#000;white-space:nowrap;letter-spacing:-0.2px">17488</div>
<div style="left:377px;top:141px;width:25px;height:22px;background:#dae1fb;"></div>
<div style="left:380px;top:144.5px;width:22px;overflow:hidden;height:16px;line-height:16px;color:#000;white-space:nowrap;letter-spacing:-0.3px">пор.</div>
<div style="left:403px;top:141px;width:51px;height:22px;background:#ffffff;"></div>
<div style="left:403px;top:144.5px;width:47.7px;text-align:right;overflow:hidden;height:16px;line-height:16px;color:#000;white-space:nowrap;letter-spacing:-0.1px">1,43</div>
<div style="left:455px;top:141px;width:51px;height:22px;background:#ffffff;"></div>
<div style="left:455px;top:144.5px;width:47.7px;text-align:right;overflow:hidden;height:16px;line-height:16px;color:#000;white-space:nowrap;letter-spacing:-0.1px">1,62</div>
<div style="left:507px;top:141px;width:32px;height:22px;background:#ffffff;"></div>
<div style="left:540px;top:141px;width:51px;height:22px;background:#ffb800;"></div>
<div style="left:592px;top:141px;width:51px;height:22px;background:#cffdcf;"></div>
<div style="left:592px;top:144.5px;width:47.7px;text-align:right;overflow:hidden;height:16px;line-height:16px;color:#000;white-space:nowrap;letter-spacing:-0.1px">93</div>
<div style="left:644px;top:141px;width:51px;height:22px;background:#ffffff;"></div>
<div style="left:696px;top:141px;width:51px;height:22px;background:#fde9e9;"></div>
<div style="left:696px;top:144.5px;width:47.7px;text-align:right;overflow:hidden;height:16px;line-height:16px;color:#000;white-space:nowrap;letter-spacing:-0.1px">15</div>
<div style="left:748px;top:141px;width:42px;height:22px;background:#ffffff;"></div>
<svg style="position:absolute;left:762.5px;top:146px;z-index:5" width="13" height="13" viewBox="0 0 13 13"><rect x="0.65" y="0.65" width="11.7" height="11.7" rx="2.2" fill="#fff" stroke="#6d6d6d" stroke-width="1.3"/></svg>
<div style="left:791px;top:141px;width:38px;height:22px;background:#ffffff;"></div>
<div style="left:791px;top:144.5px;width:34.7px;text-align:right;overflow:hidden;height:16px;line-height:16px;color:#000;white-space:nowrap;letter-spacing:-0.1px">100</div>
<div style="left:830px;top:141px;width:51px;height:22px;background:#ffffff;"></div>
<div style="left:830px;top:144.5px;width:47.7px;text-align:right;overflow:hidden;height:16px;line-height:16px;color:#000;white-space:nowrap;letter-spacing:-0.1px">6</div>
<div style="left:882px;top:141px;width:71px;height:22px;background:#ffffff;"></div>
<div style="left:882px;top:144.5px;width:67.7px;text-align:right;overflow:hidden;height:16px;line-height:16px;color:#000;white-space:nowrap;letter-spacing:-0.1px">100</div>
<div style="left:954px;top:141px;width:47px;height:22px;background:#cffdcf;"></div>
<div style="left:954px;top:144.5px;width:43.7px;text-align:right;overflow:hidden;height:16px;line-height:16px;color:#1f88b8;white-space:nowrap;letter-spacing:-0.1px">93</div>
<div style="left:1002px;top:141px;width:47px;height:22px;background:#bde2fb;"></div>
<div style="left:1050px;top:141px;width:47px;height:22px;background:#cffdcf;"></div>
<div style="left:1098px;top:141px;width:47px;height:22px;background:#bde2fb;"></div>
<div style="left:1146px;top:141px;width:47px;height:22px;background:#f4fdc4;"></div>
<div style="left:1146px;top:144.5px;width:43.7px;text-align:right;overflow:hidden;height:16px;line-height:16px;color:#1f88b8;white-space:nowrap;letter-spacing:-0.1px">15</div>
<div style="left:1194px;top:141px;width:42px;height:22px;background:#ffffff;"></div>
<svg style="position:absolute;left:1208.5px;top:146px;z-index:5" width="13" height="13" viewBox="0 0 13 13"><rect x="0.65" y="0.65" width="11.7" height="11.7" rx="2.2" fill="#fff" stroke="#6d6d6d" stroke-width="1.3"/></svg>
<div style="left:1237px;top:141px;width:73px;height:22px;background:#ffffff;"></div>
<div style="left:0px;top:163px;width:1400px;height:1px;background:#e3e3e3;"></div>
<div style="left:0px;top:164px;width:200px;height:22px;background:#ffffff;"></div>
<div style="left:3.5px;top:167.5px;width:196.5px;overflow:hidden;height:16px;line-height:16px;color:#000;white-space:nowrap;letter-spacing:-0.3px">МОЛОКО УЛЬТРАП.САВУШ.ПРОД.2.5% 1Л</div>
<div style="left:201px;top:164px;width:103px;height:22px;background:#ffffff;"></div>
<div style="left:204.5px;top:167.5px;width:99.5px;overflow:hidden;height:16px;line-height:16px;color:#000;white-space:nowrap;letter-spacing:-0.2px">4810268018671</div>
<div style="left:305px;top:164px;width:71px;height:22px;background:#ffffff;"></div>
<div style="left:308.5px;top:167.5px;width:67.5px;overflow:hidden;height:16px;line-height:16px;color:#000;white-space:nowrap;letter-spacing:-0.2px">17491</div>
<div style="left:377px;top:164px;width:25px;height:22px;background:#ffffff;"></div>
<div style="left:380px;top:167.5px;width:22px;overflow:hidden;height:16px;line-height:16px;color:#000;white-space:nowrap;letter-spacing:-0.3px">пор.</div>
<div style="left:403px;top:164px;width:51px;height:22px;background:#ffffff;"></div>
<div style="left:403px;top:167.5px;width:47.7px;text-align:right;overflow:hidden;height:16px;line-height:16px;color:#000;white-space:nowrap;letter-spacing:-0.1px">1,12</div>
<div style="left:455px;top:164px;width:51px;height:22px;background:#ffffff;"></div>
<div style="left:455px;top:167.5px;width:47.7px;text-align:right;overflow:hidden;height:16px;line-height:16px;color:#000;white-space:nowrap;letter-spacing:-0.1px">1,39</div>
<div style="left:507px;top:164px;width:32px;height:22px;background:#ffffff;"></div>
<div style="left:507px;top:167.5px;width:28.7px;text-align:right;overflow:hidden;height:16px;line-height:16px;color:#000;white-space:nowrap;letter-spacing:-0.1px">6</div>
<div style="left:540px;top:164px;width:51px;height:22px;background:#ffb800;"></div>
<div style="left:540px;top:167.5px;width:47.7px;text-align:right;overflow:hidden;height:16px;line-height:16px;color:#000;white-space:nowrap;letter-spacing:-0.1px">24</div>
<div style="left:592px;top:164px;width:51px;height:22px;background:#cffdcf;"></div>
<div style="left:592px;top:167.5px;width:47.7px;text-align:right;overflow:hidden;height:16px;line-height:16px;color:#000;white-space:nowrap;letter-spacing:-0.1px">144</div>
<div style="left:644px;top:164px;width:51px;height:22px;background:#ffffff;"></div>
<div style="left:696px;top:164px;width:51px;height:22px;background:#fde9e9;"></div>
<div style="left:696px;top:167.5px;width:47.7px;text-align:right;overflow:hidden;height:16px;line-height:16px;color:#000;white-space:nowrap;letter-spacing:-0.1px">8</div>
<div style="left:748px;top:164px;width:42px;height:22px;background:#ffffff;"></div>
<svg style="position:absolute;left:762.5px;top:169px;z-index:5" width="13" height="13" viewBox="0 0 13 13"><rect x="0.65" y="0.65" width="11.7" height="11.7" rx="2.2" fill="#fff" stroke="#6d6d6d" stroke-width="1.3"/></svg>
<div style="left:791px;top:164px;width:38px;height:22px;background:#ffffff;"></div>
<div style="left:791px;top:167.5px;width:34.7px;text-align:right;overflow:hidden;height:16px;line-height:16px;color:#000;white-space:nowrap;letter-spacing:-0.1px">100</div>
<div style="left:830px;top:164px;width:51px;height:22px;background:#ffffff;"></div>
<div style="left:830px;top:167.5px;width:47.7px;text-align:right;overflow:hidden;height:16px;line-height:16px;color:#000;white-space:nowrap;letter-spacing:-0.1px">34</div>
<div style="left:882px;top:164px;width:71px;height:22px;background:#ffffff;"></div>
<div style="left:882px;top:167.5px;width:67.7px;text-align:right;overflow:hidden;height:16px;line-height:16px;color:#000;white-space:nowrap;letter-spacing:-0.1px">100</div>
<div style="left:954px;top:164px;width:47px;height:22px;background:#cffdcf;"></div>
<div style="left:954px;top:167.5px;width:43.7px;text-align:right;overflow:hidden;height:16px;line-height:16px;color:#1f88b8;white-space:nowrap;letter-spacing:-0.1px">144</div>
<div style="left:1002px;top:164px;width:47px;height:22px;background:#bde2fb;"></div>
<div style="left:1050px;top:164px;width:47px;height:22px;background:#cffdcf;"></div>
<div style="left:1098px;top:164px;width:47px;height:22px;background:#bde2fb;"></div>
<div style="left:1146px;top:164px;width:47px;height:22px;background:#f4fdc4;"></div>
<div style="left:1146px;top:167.5px;width:43.7px;text-align:right;overflow:hidden;height:16px;line-height:16px;color:#1f88b8;white-space:nowrap;letter-spacing:-0.1px">8</div>
<div style="left:1194px;top:164px;width:42px;height:22px;background:#ffffff;"></div>
<svg style="position:absolute;left:1208.5px;top:169px;z-index:5" width="13" height="13" viewBox="0 0 13 13"><rect x="0.65" y="0.65" width="11.7" height="11.7" rx="2.2" fill="#fff" stroke="#6d6d6d" stroke-width="1.3"/></svg>
<div style="left:1237px;top:164px;width:73px;height:22px;background:#ffffff;"></div>
<div style="left:0px;top:186px;width:1400px;height:1px;background:#e3e3e3;"></div>
<div style="left:0px;top:187px;width:200px;height:22px;background:#ffffff;"></div>
<div style="left:3.5px;top:190.5px;width:196.5px;overflow:hidden;height:16px;line-height:16px;color:#000;white-space:nowrap;letter-spacing:-0.3px">МОЛОКО УЛЬТРАП.ТЕМА 3.2% 500МЛ</div>
<div style="left:201px;top:187px;width:103px;height:22px;background:#ffffff;"></div>
<div style="left:204.5px;top:190.5px;width:99.5px;overflow:hidden;height:16px;line-height:16px;color:#000;white-space:nowrap;letter-spacing:-0.2px">4607161621424</div>
<div style="left:305px;top:187px;width:71px;height:22px;background:#ffffff;"></div>
<div style="left:308.5px;top:190.5px;width:67.5px;overflow:hidden;height:16px;line-height:16px;color:#000;white-space:nowrap;letter-spacing:-0.2px">17492</div>
<div style="left:377px;top:187px;width:25px;height:22px;background:#ffffff;"></div>
<div style="left:380px;top:190.5px;width:22px;overflow:hidden;height:16px;line-height:16px;color:#000;white-space:nowrap;letter-spacing:-0.3px">пор.</div>
<div style="left:403px;top:187px;width:51px;height:22px;background:#ffffff;"></div>
<div style="left:403px;top:190.5px;width:47.7px;text-align:right;overflow:hidden;height:16px;line-height:16px;color:#000;white-space:nowrap;letter-spacing:-0.1px">1,4</div>
<div style="left:455px;top:187px;width:51px;height:22px;background:#ffffff;"></div>
<div style="left:455px;top:190.5px;width:47.7px;text-align:right;overflow:hidden;height:16px;line-height:16px;color:#000;white-space:nowrap;letter-spacing:-0.1px">1,69</div>
<div style="left:507px;top:187px;width:32px;height:22px;background:#ffffff;"></div>
<div style="left:507px;top:190.5px;width:28.7px;text-align:right;overflow:hidden;height:16px;line-height:16px;color:#000;white-space:nowrap;letter-spacing:-0.1px">1</div>
<div style="left:540px;top:187px;width:51px;height:22px;background:#ffb800;"></div>
<div style="left:592px;top:187px;width:51px;height:22px;background:#cffdcf;"></div>
<div style="left:644px;top:187px;width:51px;height:22px;background:#ffffff;"></div>
<div style="left:644px;top:190.5px;width:47.7px;text-align:right;overflow:hidden;height:16px;line-height:16px;color:#000;white-space:nowrap;letter-spacing:-0.1px">90,76</div>
<div style="left:696px;top:187px;width:51px;height:22px;background:#fde9e9;"></div>
<div style="left:696px;top:190.5px;width:47.7px;text-align:right;overflow:hidden;height:16px;line-height:16px;color:#000;white-space:nowrap;letter-spacing:-0.1px">10</div>
<div style="left:748px;top:187px;width:42px;height:22px;background:#ffffff;"></div>
<svg style="position:absolute;left:762.5px;top:192px;z-index:5" width="13" height="13" viewBox="0 0 13 13"><rect x="0.65" y="0.65" width="11.7" height="11.7" rx="2.2" fill="#fff" stroke="#6d6d6d" stroke-width="1.3"/></svg>
<div style="left:791px;top:187px;width:38px;height:22px;background:#ffffff;"></div>
<div style="left:791px;top:190.5px;width:34.7px;text-align:right;overflow:hidden;height:16px;line-height:16px;color:#000;white-space:nowrap;letter-spacing:-0.1px">100</div>
<div style="left:830px;top:187px;width:51px;height:22px;background:#ffffff;"></div>
<div style="left:882px;top:187px;width:71px;height:22px;background:#ffffff;"></div>
<div style="left:882px;top:190.5px;width:67.7px;text-align:right;overflow:hidden;height:16px;line-height:16px;color:#000;white-space:nowrap;letter-spacing:-0.1px">100</div>
<div style="left:954px;top:187px;width:47px;height:22px;background:#cffdcf;"></div>
<div style="left:1002px;top:187px;width:47px;height:22px;background:#bde2fb;"></div>
<div style="left:1050px;top:187px;width:47px;height:22px;background:#cffdcf;"></div>
<div style="left:1098px;top:187px;width:47px;height:22px;background:#bde2fb;"></div>
<div style="left:1146px;top:187px;width:47px;height:22px;background:#f4fdc4;"></div>
<div style="left:1146px;top:190.5px;width:43.7px;text-align:right;overflow:hidden;height:16px;line-height:16px;color:#1f88b8;white-space:nowrap;letter-spacing:-0.1px">10</div>
<div style="left:1194px;top:187px;width:42px;height:22px;background:#ffffff;"></div>
<svg style="position:absolute;left:1208.5px;top:192px;z-index:5" width="13" height="13" viewBox="0 0 13 13"><rect x="0.65" y="0.65" width="11.7" height="11.7" rx="2.2" fill="#fff" stroke="#6d6d6d" stroke-width="1.3"/></svg>
<div style="left:1237px;top:187px;width:73px;height:22px;background:#ffffff;"></div>
<div style="left:0px;top:209px;width:1400px;height:1px;background:#e3e3e3;"></div>
<div style="left:0px;top:210px;width:200px;height:22px;background:#ffffff;"></div>
<div style="left:3.5px;top:213.5px;width:196.5px;overflow:hidden;height:16px;line-height:16px;color:#000;white-space:nowrap;letter-spacing:-0.3px">МОЛОКО УЛЬТР.БАБ.КРЫНКА 1.5%</div>
<div style="left:201px;top:210px;width:103px;height:22px;background:#ffffff;"></div>
<div style="left:204.5px;top:213.5px;width:99.5px;overflow:hidden;height:16px;line-height:16px;color:#000;white-space:nowrap;letter-spacing:-0.2px">4810223017114</div>
<div style="left:305px;top:210px;width:71px;height:22px;background:#ffffff;"></div>
<div style="left:308.5px;top:213.5px;width:67.5px;overflow:hidden;height:16px;line-height:16px;color:#000;white-space:nowrap;letter-spacing:-0.2px">17493</div>
<div style="left:377px;top:210px;width:25px;height:22px;background:#ffffff;"></div>
<div style="left:380px;top:213.5px;width:22px;overflow:hidden;height:16px;line-height:16px;color:#000;white-space:nowrap;letter-spacing:-0.3px">пор.</div>
<div style="left:403px;top:210px;width:51px;height:22px;background:#ffffff;"></div>
<div style="left:403px;top:213.5px;width:47.7px;text-align:right;overflow:hidden;height:16px;line-height:16px;color:#000;white-space:nowrap;letter-spacing:-0.1px">0,96</div>
<div style="left:455px;top:210px;width:51px;height:22px;background:#ffffff;"></div>
<div style="left:455px;top:213.5px;width:47.7px;text-align:right;overflow:hidden;height:16px;line-height:16px;color:#000;white-space:nowrap;letter-spacing:-0.1px">0,25</div>
<div style="left:507px;top:210px;width:32px;height:22px;background:#ffffff;"></div>
<div style="left:507px;top:213.5px;width:28.7px;text-align:right;overflow:hidden;height:16px;line-height:16px;color:#000;white-space:nowrap;letter-spacing:-0.1px">6</div>
<div style="left:540px;top:210px;width:51px;height:22px;background:#ffb800;"></div>
<div style="left:592px;top:210px;width:51px;height:22px;background:#cffdcf;"></div>
<div style="left:644px;top:210px;width:51px;height:22px;background:#ffffff;"></div>
<div style="left:644px;top:213.5px;width:47.7px;text-align:right;overflow:hidden;height:16px;line-height:16px;color:#000;white-space:nowrap;letter-spacing:-0.1px">73,192</div>
<div style="left:696px;top:210px;width:51px;height:22px;background:#fde9e9;"></div>
<div style="left:696px;top:213.5px;width:47.7px;text-align:right;overflow:hidden;height:16px;line-height:16px;color:#000;white-space:nowrap;letter-spacing:-0.1px">71</div>
<div style="left:748px;top:210px;width:42px;height:22px;background:#ffffff;"></div>
<svg style="position:absolute;left:762.5px;top:215px;z-index:5" width="13" height="13" viewBox="0 0 13 13"><rect x="0.65" y="0.65" width="11.7" height="11.7" rx="2.2" fill="#fff" stroke="#6d6d6d" stroke-width="1.3"/></svg>
<div style="left:791px;top:210px;width:38px;height:22px;background:#ffffff;"></div>
<div style="left:791px;top:213.5px;width:34.7px;text-align:right;overflow:hidden;height:16px;line-height:16px;color:#000;white-space:nowrap;letter-spacing:-0.1px">100</div>
<div style="left:830px;top:210px;width:51px;height:22px;background:#ffffff;"></div>
<div style="left:830px;top:213.5px;width:47.7px;text-align:right;overflow:hidden;height:16px;line-height:16px;color:#000;white-space:nowrap;letter-spacing:-0.1px">40</div>
<div style="left:882px;top:210px;width:71px;height:22px;background:#ffffff;"></div>
<div style="left:882px;top:213.5px;width:67.7px;text-align:right;overflow:hidden;height:16px;line-height:16px;color:#000;white-space:nowrap;letter-spacing:-0.1px">100</div>
<div style="left:954px;top:210px;width:47px;height:22px;background:#cffdcf;"></div>
<div style="left:1002px;top:210px;width:47px;height:22px;background:#bde2fb;"></div>
<div style="left:1050px;top:210px;width:47px;height:22px;background:#cffdcf;"></div>
<div style="left:1098px;top:210px;width:47px;height:22px;background:#bde2fb;"></div>
<div style="left:1146px;top:210px;width:47px;height:22px;background:#f4fdc4;"></div>
<div style="left:1146px;top:213.5px;width:43.7px;text-align:right;overflow:hidden;height:16px;line-height:16px;color:#1f88b8;white-space:nowrap;letter-spacing:-0.1px">71</div>
<div style="left:1194px;top:210px;width:42px;height:22px;background:#ffffff;"></div>
<svg style="position:absolute;left:1208.5px;top:215px;z-index:5" width="13" height="13" viewBox="0 0 13 13"><rect x="0.65" y="0.65" width="11.7" height="11.7" rx="2.2" fill="#fff" stroke="#6d6d6d" stroke-width="1.3"/></svg>
<div style="left:1237px;top:210px;width:73px;height:22px;background:#ffffff;"></div>
<div style="left:0px;top:232px;width:1400px;height:1px;background:#e3e3e3;"></div>
<div style="left:0px;top:233px;width:200px;height:22px;background:#ffffff;"></div>
<div style="left:3.5px;top:236.5px;width:196.5px;overflow:hidden;height:16px;line-height:16px;color:#000;white-space:nowrap;letter-spacing:-0.3px">МОЛОКО УЛЬТР.БАБ.КРЫНКА 2.5%</div>
<div style="left:201px;top:233px;width:103px;height:22px;background:#ffffff;"></div>
<div style="left:204.5px;top:236.5px;width:99.5px;overflow:hidden;height:16px;line-height:16px;color:#000;white-space:nowrap;letter-spacing:-0.2px">4810223018579</div>
<div style="left:305px;top:233px;width:71px;height:22px;background:#ffffff;"></div>
<div style="left:308.5px;top:236.5px;width:67.5px;overflow:hidden;height:16px;line-height:16px;color:#000;white-space:nowrap;letter-spacing:-0.2px">17494</div>
<div style="left:377px;top:233px;width:25px;height:22px;background:#ffffff;"></div>
<div style="left:380px;top:236.5px;width:22px;overflow:hidden;height:16px;line-height:16px;color:#000;white-space:nowrap;letter-spacing:-0.3px">пор.</div>
<div style="left:403px;top:233px;width:51px;height:22px;background:#ffffff;"></div>
<div style="left:403px;top:236.5px;width:47.7px;text-align:right;overflow:hidden;height:16px;line-height:16px;color:#000;white-space:nowrap;letter-spacing:-0.1px">1,03</div>
<div style="left:455px;top:233px;width:51px;height:22px;background:#ffffff;"></div>
<div style="left:455px;top:236.5px;width:47.7px;text-align:right;overflow:hidden;height:16px;line-height:16px;color:#000;white-space:nowrap;letter-spacing:-0.1px">1,29</div>
<div style="left:507px;top:233px;width:32px;height:22px;background:#ffffff;"></div>
<div style="left:507px;top:236.5px;width:28.7px;text-align:right;overflow:hidden;height:16px;line-height:16px;color:#000;white-space:nowrap;letter-spacing:-0.1px">6</div>
<div style="left:540px;top:233px;width:51px;height:22px;background:#ffb800;"></div>
<div style="left:592px;top:233px;width:51px;height:22px;background:#cffdcf;"></div>
<div style="left:644px;top:233px;width:51px;height:22px;background:#ffffff;"></div>
<div style="left:644px;top:236.5px;width:47.7px;text-align:right;overflow:hidden;height:16px;line-height:16px;color:#000;white-space:nowrap;letter-spacing:-0.1px">122,432</div>
<div style="left:696px;top:233px;width:51px;height:22px;background:#fde9e9;"></div>
<div style="left:696px;top:236.5px;width:47.7px;text-align:right;overflow:hidden;height:16px;line-height:16px;color:#000;white-space:nowrap;letter-spacing:-0.1px">21</div>
<div style="left:748px;top:233px;width:42px;height:22px;background:#ffffff;"></div>
<svg style="position:absolute;left:762.5px;top:238px;z-index:5" width="13" height="13" viewBox="0 0 13 13"><rect x="0.65" y="0.65" width="11.7" height="11.7" rx="2.2" fill="#fff" stroke="#6d6d6d" stroke-width="1.3"/></svg>
<div style="left:791px;top:233px;width:38px;height:22px;background:#ffffff;"></div>
<div style="left:791px;top:236.5px;width:34.7px;text-align:right;overflow:hidden;height:16px;line-height:16px;color:#000;white-space:nowrap;letter-spacing:-0.1px">100</div>
<div style="left:830px;top:233px;width:51px;height:22px;background:#ffffff;"></div>
<div style="left:830px;top:236.5px;width:47.7px;text-align:right;overflow:hidden;height:16px;line-height:16px;color:#000;white-space:nowrap;letter-spacing:-0.1px">38</div>
<div style="left:882px;top:233px;width:71px;height:22px;background:#ffffff;"></div>
<div style="left:882px;top:236.5px;width:67.7px;text-align:right;overflow:hidden;height:16px;line-height:16px;color:#000;white-space:nowrap;letter-spacing:-0.1px">100</div>
<div style="left:954px;top:233px;width:47px;height:22px;background:#cffdcf;"></div>
<div style="left:1002px;top:233px;width:47px;height:22px;background:#bde2fb;"></div>
<div style="left:1050px;top:233px;width:47px;height:22px;background:#cffdcf;"></div>
<div style="left:1098px;top:233px;width:47px;height:22px;background:#bde2fb;"></div>
<div style="left:1146px;top:233px;width:47px;height:22px;background:#f4fdc4;"></div>
<div style="left:1146px;top:236.5px;width:43.7px;text-align:right;overflow:hidden;height:16px;line-height:16px;color:#1f88b8;white-space:nowrap;letter-spacing:-0.1px">21</div>
<div style="left:1194px;top:233px;width:42px;height:22px;background:#ffffff;"></div>
<svg style="position:absolute;left:1208.5px;top:238px;z-index:5" width="13" height="13" viewBox="0 0 13 13"><rect x="0.65" y="0.65" width="11.7" height="11.7" rx="2.2" fill="#fff" stroke="#6d6d6d" stroke-width="1.3"/></svg>
<div style="left:1237px;top:233px;width:73px;height:22px;background:#ffffff;"></div>
<div style="left:0px;top:255px;width:1400px;height:1px;background:#e3e3e3;"></div>
<div style="left:200px;top:71px;width:1px;height:181px;background:#e3e3e3;"></div>
<div style="left:304px;top:71px;width:1px;height:181px;background:#e3e3e3;"></div>
<div style="left:376px;top:71px;width:1px;height:181px;background:#e3e3e3;"></div>
<div style="left:402px;top:71px;width:1px;height:181px;background:#e3e3e3;"></div>
<div style="left:454px;top:71px;width:1px;height:181px;background:#e3e3e3;"></div>
<div style="left:506px;top:71px;width:1px;height:181px;background:#e3e3e3;"></div>
<div style="left:539px;top:71px;width:1px;height:181px;background:#e3e3e3;"></div>
<div style="left:591px;top:71px;width:1px;height:181px;background:#e3e3e3;"></div>
<div style="left:643px;top:71px;width:1px;height:181px;background:#e3e3e3;"></div>
<div style="left:695px;top:71px;width:1px;height:181px;background:#e3e3e3;"></div>
<div style="left:747px;top:71px;width:1px;height:181px;background:#e3e3e3;"></div>
<div style="left:790px;top:71px;width:1px;height:181px;background:#e3e3e3;"></div>
<div style="left:829px;top:71px;width:1px;height:181px;background:#e3e3e3;"></div>
<div style="left:881px;top:71px;width:1px;height:181px;background:#e3e3e3;"></div>
<div style="left:953px;top:71px;width:1px;height:181px;background:#e3e3e3;"></div>
<div style="left:1001px;top:71px;width:1px;height:181px;background:#e3e3e3;"></div>
<div style="left:1049px;top:71px;width:1px;height:181px;background:#e3e3e3;"></div>
<div style="left:1097px;top:71px;width:1px;height:181px;background:#e3e3e3;"></div>
<div style="left:1145px;top:71px;width:1px;height:181px;background:#e3e3e3;"></div>
<div style="left:1193px;top:71px;width:1px;height:181px;background:#e3e3e3;"></div>
<div style="left:1236px;top:71px;width:1px;height:181px;background:#e3e3e3;"></div>
<div style="left:0px;top:71px;width:1400px;height:1px;background:#e3e3e3;"></div>
</div>
<svg style="position:absolute;left:760px;top:215px;z-index:60" width="140" height="70" viewBox="0 0 140 70">
<circle cx="15.9" cy="10" r="4" fill="#ff0000"/>
<path d="M15.9 10 L51 59.5" stroke="#ff0000" stroke-width="3"/>
<path d="M37.9 50.6 L51.5 60.2 L47 43.3" stroke="#ff0000" stroke-width="3" fill="none"/>
<circle cx="96.8" cy="12.8" r="4" fill="#ff0000"/>
<path d="M96.8 12.8 L116.3 57" stroke="#ff0000" stroke-width="3"/>
<path d="M104.5 45.7 L116.6 57.8 L115.8 41.4" stroke="#ff0000" stroke-width="3" fill="none"/>
</svg>
<div style="left:795px;top:100px;width:53px;height:71px;border:3px solid #ff0000;z-index:50"></div>
<div style="left:850px;top:99px;width:52px;height:71px;border:3px solid #ff0000;z-index:50"></div>
<svg style="position:absolute;left:1537px;top:112px;z-index:5" width="11" height="10" viewBox="0 0 11 10"><path d="M0.5 9 L5.5 2 L10.5 9 Z" fill="#d9d9d9"/></svg>
<div style="left:1538px;top:230px;width:9px;height:71px;background:#d9d9d9;border-radius:4.5px"></div>
<svg style="position:absolute;left:1537px;top:342px;z-index:5" width="11" height="10" viewBox="0 0 11 10"><path d="M0.5 1 L5.5 8 L10.5 1 Z" fill="#d9d9d9"/></svg>
<svg style="position:absolute;left:267px;top:360px;z-index:5" width="9" height="10" viewBox="0 0 9 10"><path d="M8 1 L1 5 L8 9 Z" fill="#d9d9d9"/></svg>
<div style="left:283px;top:361px;width:981px;height:8.5px;background:#d9d9d9;border-radius:4.3px"></div>
<svg style="position:absolute;left:1519px;top:360px;z-index:5" width="9" height="10" viewBox="0 0 9 10"><path d="M1 1 L8 5 L1 9 Z" fill="#d9d9d9"/></svg>
<div style="left:259px;top:376px;width:28px;height:22px;background:#d3e4ea;border-radius:4px"></div>
<svg style="position:absolute;left:263px;top:379px;z-index:5" width="20" height="16" viewBox="0 0 20 16"><circle cx="3.9" cy="3" r="1.6" fill="none" stroke="#3cb6ee" stroke-width="1.1"/><circle cx="3.9" cy="7.9" r="1.6" fill="none" stroke="#3cb6ee" stroke-width="1.1"/><circle cx="3.9" cy="12.9" r="1.6" fill="none" stroke="#3cb6ee" stroke-width="1.1"/><path d="M8.4 3.3 H17.7 M8.4 8.4 H17.7 M8.4 13.4 H17.7" stroke="#222" stroke-width="1.1"/></svg>
<svg style="position:absolute;left:292px;top:378px;z-index:5" width="18" height="18" viewBox="0 0 18 18"><rect x="1.85" y="2.05" width="14.1" height="14.1" rx="1.5" fill="none" stroke="#222" stroke-width="1.3"/><path d="M6.5 2.7 V15.5 M11.7 2.7 V15.5 M2.5 6.3 H15.3 M2.5 11.3 H15.3" stroke="#3cb6ee" stroke-width="1.1"/></svg>
<svg style="position:absolute;left:325px;top:380px;z-index:5" width="16" height="15" viewBox="0 0 16 15"><path d="M0.3 1.5 H15.8 M4.3 9.5 H11.8" stroke="#222" stroke-width="1.15"/><path d="M2.3 5.5 H13.8 M6.3 13.5 H9.8" stroke="#3cb6ee" stroke-width="1.15"/></svg>
<div style="left:351px;top:376px;width:28px;height:22px;background:#d3e4ea;border-radius:4px"></div>
<svg style="position:absolute;left:357px;top:379px;z-index:5" width="16" height="16" viewBox="0 0 16 16"><g transform="translate(8 8)"><path d="M-1.5 -7 L1.5 -7 L2 -4.6 L3.9 -3.6 L6.1 -4.4 L7.4 -1.7 L5.5 0 L7.4 1.7 L6.1 4.4 L3.9 3.6 L2 4.6 L1.5 7 L-1.5 7 L-2 4.6 L-3.9 3.6 L-6.1 4.4 L-7.4 1.7 L-5.5 0 L-7.4 -1.7 L-6.1 -4.4 L-3.9 -3.6 L-2 -4.6 Z" fill="none" stroke="#333" stroke-width="1.3" stroke-linejoin="round"/><circle r="2.3" fill="none" stroke="#3cb6ee" stroke-width="1.4"/></g></svg>
<svg style="position:absolute;left:389px;top:378px;z-index:5" width="17" height="18" viewBox="0 0 17 18"><path d="M1.6 2 L2.8 1.2 V4.8" stroke="#3cb6ee" stroke-width="1.1" fill="none"/><path d="M1.5 7.9 Q2.6 7 3.6 7.9 Q3.8 8.9 1.5 11 H4" stroke="#3cb6ee" stroke-width="1" fill="none"/><path d="M1.5 13.3 H3.8 L2.4 14.8 Q4 15.1 3.6 16.4 Q2.7 17.1 1.5 16.6" stroke="#3cb6ee" stroke-width="1" fill="none"/><path d="M6.4 3.4 H15.5 M6.4 9.5 H15.5 M6.4 15.4 H15.5" stroke="#222" stroke-width="1.1"/></svg>
<svg style="position:absolute;left:417px;top:379px;z-index:5" width="17" height="16" viewBox="0 0 17 16"><path d="M0.4 1.5 H15.6 M0.4 5.5 H15.6 M0.4 9.5 H6.8 M0.4 13.4 H6.8" stroke="#222" stroke-width="1.1"/><path d="M12.4 8.2 V14.8 M9.1 11.5 H15.7" stroke="#3cb6ee" stroke-width="1.1"/></svg>
<svg style="position:absolute;left:448px;top:378px;z-index:5" width="18" height="18" viewBox="0 0 18 18"><path d="M7.7 4.5 H2.2 V15.5 H13.2 V10.6" stroke="#4a4a4a" stroke-width="1.4" fill="none" stroke-linejoin="round"/><path d="M8.5 9.2 L16 1.8 M9.6 1.8 H16 V8.4" stroke="#3cb6ee" stroke-width="1.3" fill="none"/></svg>
<svg style="position:absolute;left:480px;top:378px;z-index:5" width="18" height="18" viewBox="0 0 18 18"><path d="M5.5 13.6 H3.5 V4.5 H12.7 M10.2 1.5 L13.2 4.5 L10.2 7.5" stroke="#222" stroke-width="1.2" fill="none"/><path d="M14.8 4.5 H16.4 V13.3 H6.5 M9.3 10.3 L6.3 13.3 L9.3 16.3" stroke="#3cb6ee" stroke-width="1.2" fill="none"/></svg>
<svg style="position:absolute;left:431px;top:407px;z-index:5" width="13" height="13" viewBox="0 0 13 13"><rect x="0" y="0" width="13" height="13" rx="2" fill="#6d6d6d"/><path d="M2.8 6.8 L5.3 9.3 L10.3 3.3" stroke="#fff" stroke-width="1.8" fill="none"/></svg>
<div style="left:446px;top:407.8px;height:16px;line-height:16px;font-size:12px;color:#000;white-space:nowrap;letter-spacing:-0.1px">Активные</div>
<div style="left:505px;top:402px;width:116px;height:22px;border:1px solid #cbcbcb;border-radius:3px;background:#fff"></div>
<div style="left:513px;top:407.0px;height:16px;line-height:16px;font-size:12px;color:#000;white-space:nowrap;">(Все)</div>
<svg style="position:absolute;left:609px;top:410.0px;z-index:5" width="10" height="8" viewBox="0 0 10 8"><path d="M1 1.8 L5 5.8 L9 1.8" stroke="#111" stroke-width="1.7" fill="none"/></svg>
<svg style="position:absolute;left:633px;top:407px;z-index:5" width="13" height="13" viewBox="0 0 13 13"><rect x="0" y="0" width="13" height="13" rx="2" fill="#6d6d6d"/><path d="M2.8 6.8 L5.3 9.3 L10.3 3.3" stroke="#fff" stroke-width="1.8" fill="none"/></svg>
<div style="left:648.5px;top:407.8px;height:16px;line-height:16px;font-size:12px;color:#000;white-space:nowrap;">Признак разделения</div>
<div style="left:626px;top:402px;width:135px;height:20px;border:3px solid #ff0000;z-index:50"></div>
<svg style="position:absolute;left:771px;top:407px;z-index:5" width="13" height="13" viewBox="0 0 13 13"><rect x="0.65" y="0.65" width="11.7" height="11.7" rx="2.2" fill="#fff" stroke="#6d6d6d" stroke-width="1.3"/></svg>
<div style="left:786px;top:407.8px;height:16px;line-height:16px;font-size:12px;color:#000;white-space:nowrap;letter-spacing:-0.35px">В ассортименте (F4)</div>
<div style="left:768px;top:401px;width:126px;height:22px;border:3px solid #ff0000;z-index:50"></div>
<div style="left:902px;top:402px;width:219px;height:22px;border:1px solid #cbcbcb;border-radius:3px;background:#fff"></div>
<div style="left:910px;top:407.0px;height:16px;line-height:16px;font-size:12px;color:#000;white-space:nowrap;">В прайсе (F7)</div>
<svg style="position:absolute;left:1109px;top:410.0px;z-index:5" width="10" height="8" viewBox="0 0 10 8"><path d="M1 1.8 L5 5.8 L9 1.8" stroke="#111" stroke-width="1.7" fill="none"/></svg>
<div style="left:899px;top:398px;width:221px;height:24px;border:3px solid #ff0000;z-index:50"></div>
<div style="left:1195px;top:403px;width:99px;height:20px;border:1px solid #cbcbcb;border-radius:3px;background:#fdfdfd"></div>
<svg style="position:absolute;left:1209px;top:408px;z-index:5" width="13" height="13" viewBox="0 0 13 13"><path d="M6.9 0.8 V11.6 M2 6.2 H11.8" stroke="#444" stroke-width="1.6"/></svg>
<div style="left:1228px;top:407.8px;height:16px;line-height:16px;font-size:12px;color:#000;white-space:nowrap;">Добавить</div>
<div style="left:1300px;top:403px;width:127px;height:20px;border:1px solid #cbcbcb;border-radius:3px;background:#fdfdfd"></div>
<svg style="position:absolute;left:1313px;top:405px;z-index:5" width="16" height="16" viewBox="0 0 16 16"><path d="M3 12.5 L3.8 9.6 L10.6 2.8 Q11.4 2.1 12.2 2.8 L12.8 3.4 Q13.5 4.2 12.8 5 L6 11.8 Z" fill="none" stroke="#333" stroke-width="1.15" stroke-linejoin="round"/><path d="M2.5 14 H13.2" stroke="#5ac8f0" stroke-width="1.1"/></svg>
<div style="left:1333px;top:407.8px;height:16px;line-height:16px;font-size:12px;color:#000;white-space:nowrap;letter-spacing:-0.2px">Редактировать</div>
<div style="left:1433px;top:403px;width:116px;height:20px;border:1px solid #cbcbcb;border-radius:3px;background:#fdfdfd"></div>
<div style="left:1448px;top:407.8px;height:16px;line-height:16px;font-size:12px;color:#000;white-space:nowrap;letter-spacing:-0.1px">Копировать (F6)</div>
<svg style="position:absolute;left:1133px;top:407px;z-index:5" width="13" height="13" viewBox="0 0 13 13"><rect x="0.65" y="0.65" width="11.7" height="11.7" rx="2.2" fill="#fff" stroke="#6d6d6d" stroke-width="1.3"/></svg>
<div style="left:1147.5px;top:407.8px;height:16px;line-height:16px;font-size:12px;color:#000;white-space:nowrap;letter-spacing:-0.2px">В акции</div>
<div style="left:1129px;top:403px;width:63px;height:18px;border:3px solid #ff0000;z-index:50"></div>
<svg style="position:absolute;left:1557px;top:7px;z-index:5" width="11" height="9" viewBox="0 0 11 9"><path d="M0.5 8 L5.5 1.5 L10.5 8 Z" fill="#d9d9d9"/></svg>
<div style="left:1558px;top:24px;width:9px;height:420px;background:#d9d9d9;border-radius:4.5px"></div>
</body></html>
